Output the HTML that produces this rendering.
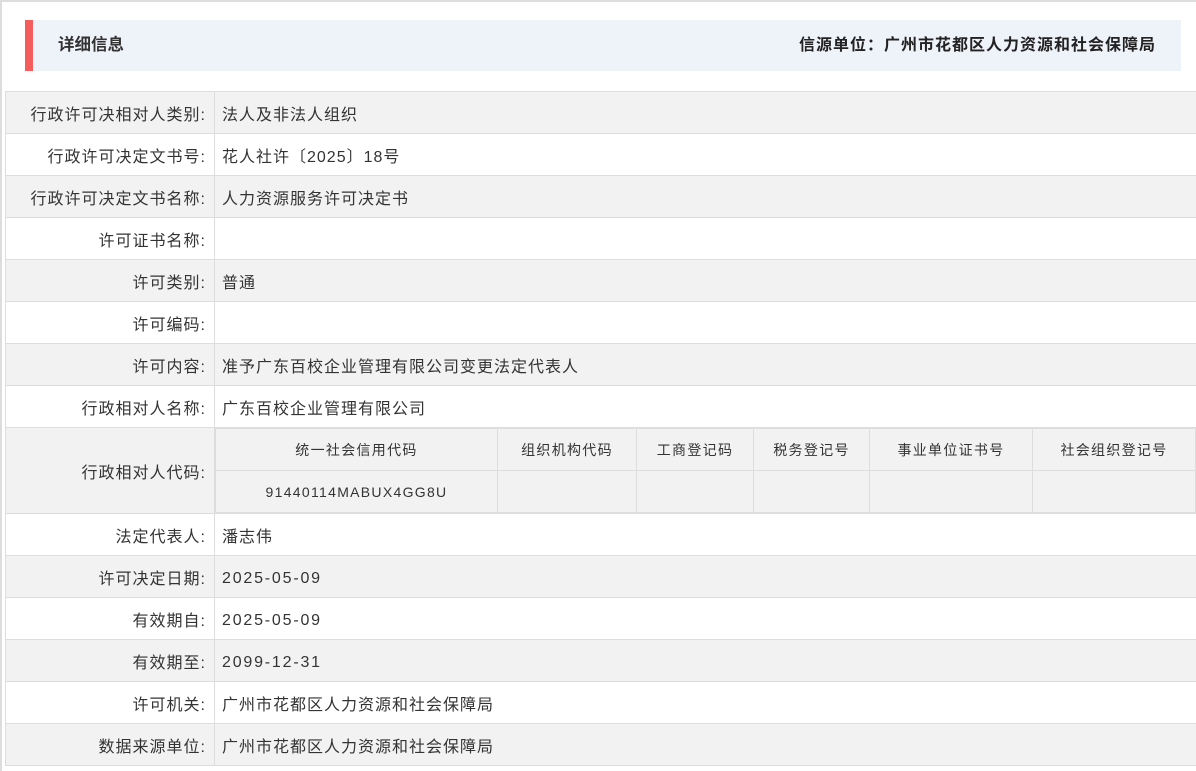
<!DOCTYPE html>
<html><head><meta charset="utf-8"><style>
*{margin:0;padding:0;box-sizing:border-box}
body{width:1196px;height:771px;background:#fff;font-family:"Liberation Sans","Noto Sans CJK SC",sans-serif;color:#333;position:relative;overflow:hidden}
.frame{position:absolute;left:0;top:0;width:1196px;height:771px;border-left:2px solid #ddd;border-top:2px solid #ddd}
.hdr{position:absolute;left:25px;top:20px;width:1156px;height:51px;background:#eef2f9;border-left:8px solid #f55d5d}
.hdr .t{position:absolute;left:25px;top:0;line-height:51px;font-size:16.5px;font-weight:bold;color:#333}
.hdr .r{position:absolute;right:25px;top:0;line-height:51px;font-size:16px;font-weight:bold;letter-spacing:1px;color:#222}
table.m{position:absolute;left:5px;top:91px;width:1192px;border-collapse:collapse}
table.m td{border:1px solid #ddd;height:42px;font-size:16px;letter-spacing:1px;padding:0}
table.m td.l{width:209px;text-align:right;padding-right:8px}
table.m td.v{padding-left:7px}
table.m tr.g td{background:#f2f2f2}
table.m tr.g td.n{background:#fff}
.d{letter-spacing:1.8px;position:relative;top:2px}
table.s{width:100%;border-collapse:collapse}
table.s td{height:42px;border:1px solid #ddd;text-align:center;font-size:14px;letter-spacing:1.3px;background:#f2f2f2;padding:0}
</style></head><body>
<div class="frame"></div>
<div class="hdr"><span class="t">详细信息</span><span class="r">信源单位：广州市花都区人力资源和社会保障局</span></div>
<table class="m">
<tr class="g"><td class="l">行政许可决相对人类别:</td><td class="v">法人及非法人组织</td></tr>
<tr><td class="l">行政许可决定文书号:</td><td class="v">花人社许〔2025〕18号</td></tr>
<tr class="g"><td class="l">行政许可决定文书名称:</td><td class="v">人力资源服务许可决定书</td></tr>
<tr><td class="l">许可证书名称:</td><td class="v"></td></tr>
<tr class="g"><td class="l">许可类别:</td><td class="v">普通</td></tr>
<tr><td class="l">许可编码:</td><td class="v"></td></tr>
<tr class="g"><td class="l">许可内容:</td><td class="v">准予广东百校企业管理有限公司变更法定代表人</td></tr>
<tr><td class="l">行政相对人名称:</td><td class="v">广东百校企业管理有限公司</td></tr>
<tr class="g"><td class="l" style="height:86px">行政相对人代码:</td><td class="n" style="padding:0">
<table class="s"><tr><td style="width:282px">统一社会信用代码</td><td style="width:139px">组织机构代码</td><td style="width:117px">工商登记码</td><td style="width:116px">税务登记号</td><td style="width:163px">事业单位证书号</td><td>社会组织登记号</td></tr>
<tr><td>91440114MABUX4GG8U</td><td></td><td></td><td></td><td></td><td></td></tr></table>
</td></tr>
<tr><td class="l">法定代表人:</td><td class="v">潘志伟</td></tr>
<tr class="g"><td class="l">许可决定日期:</td><td class="v"><span class="d">2025-05-09</span></td></tr>
<tr><td class="l">有效期自:</td><td class="v"><span class="d">2025-05-09</span></td></tr>
<tr class="g"><td class="l">有效期至:</td><td class="v"><span class="d">2099-12-31</span></td></tr>
<tr><td class="l">许可机关:</td><td class="v">广州市花都区人力资源和社会保障局</td></tr>
<tr class="g"><td class="l">数据来源单位:</td><td class="v">广州市花都区人力资源和社会保障局</td></tr>
</table>
</body></html>
